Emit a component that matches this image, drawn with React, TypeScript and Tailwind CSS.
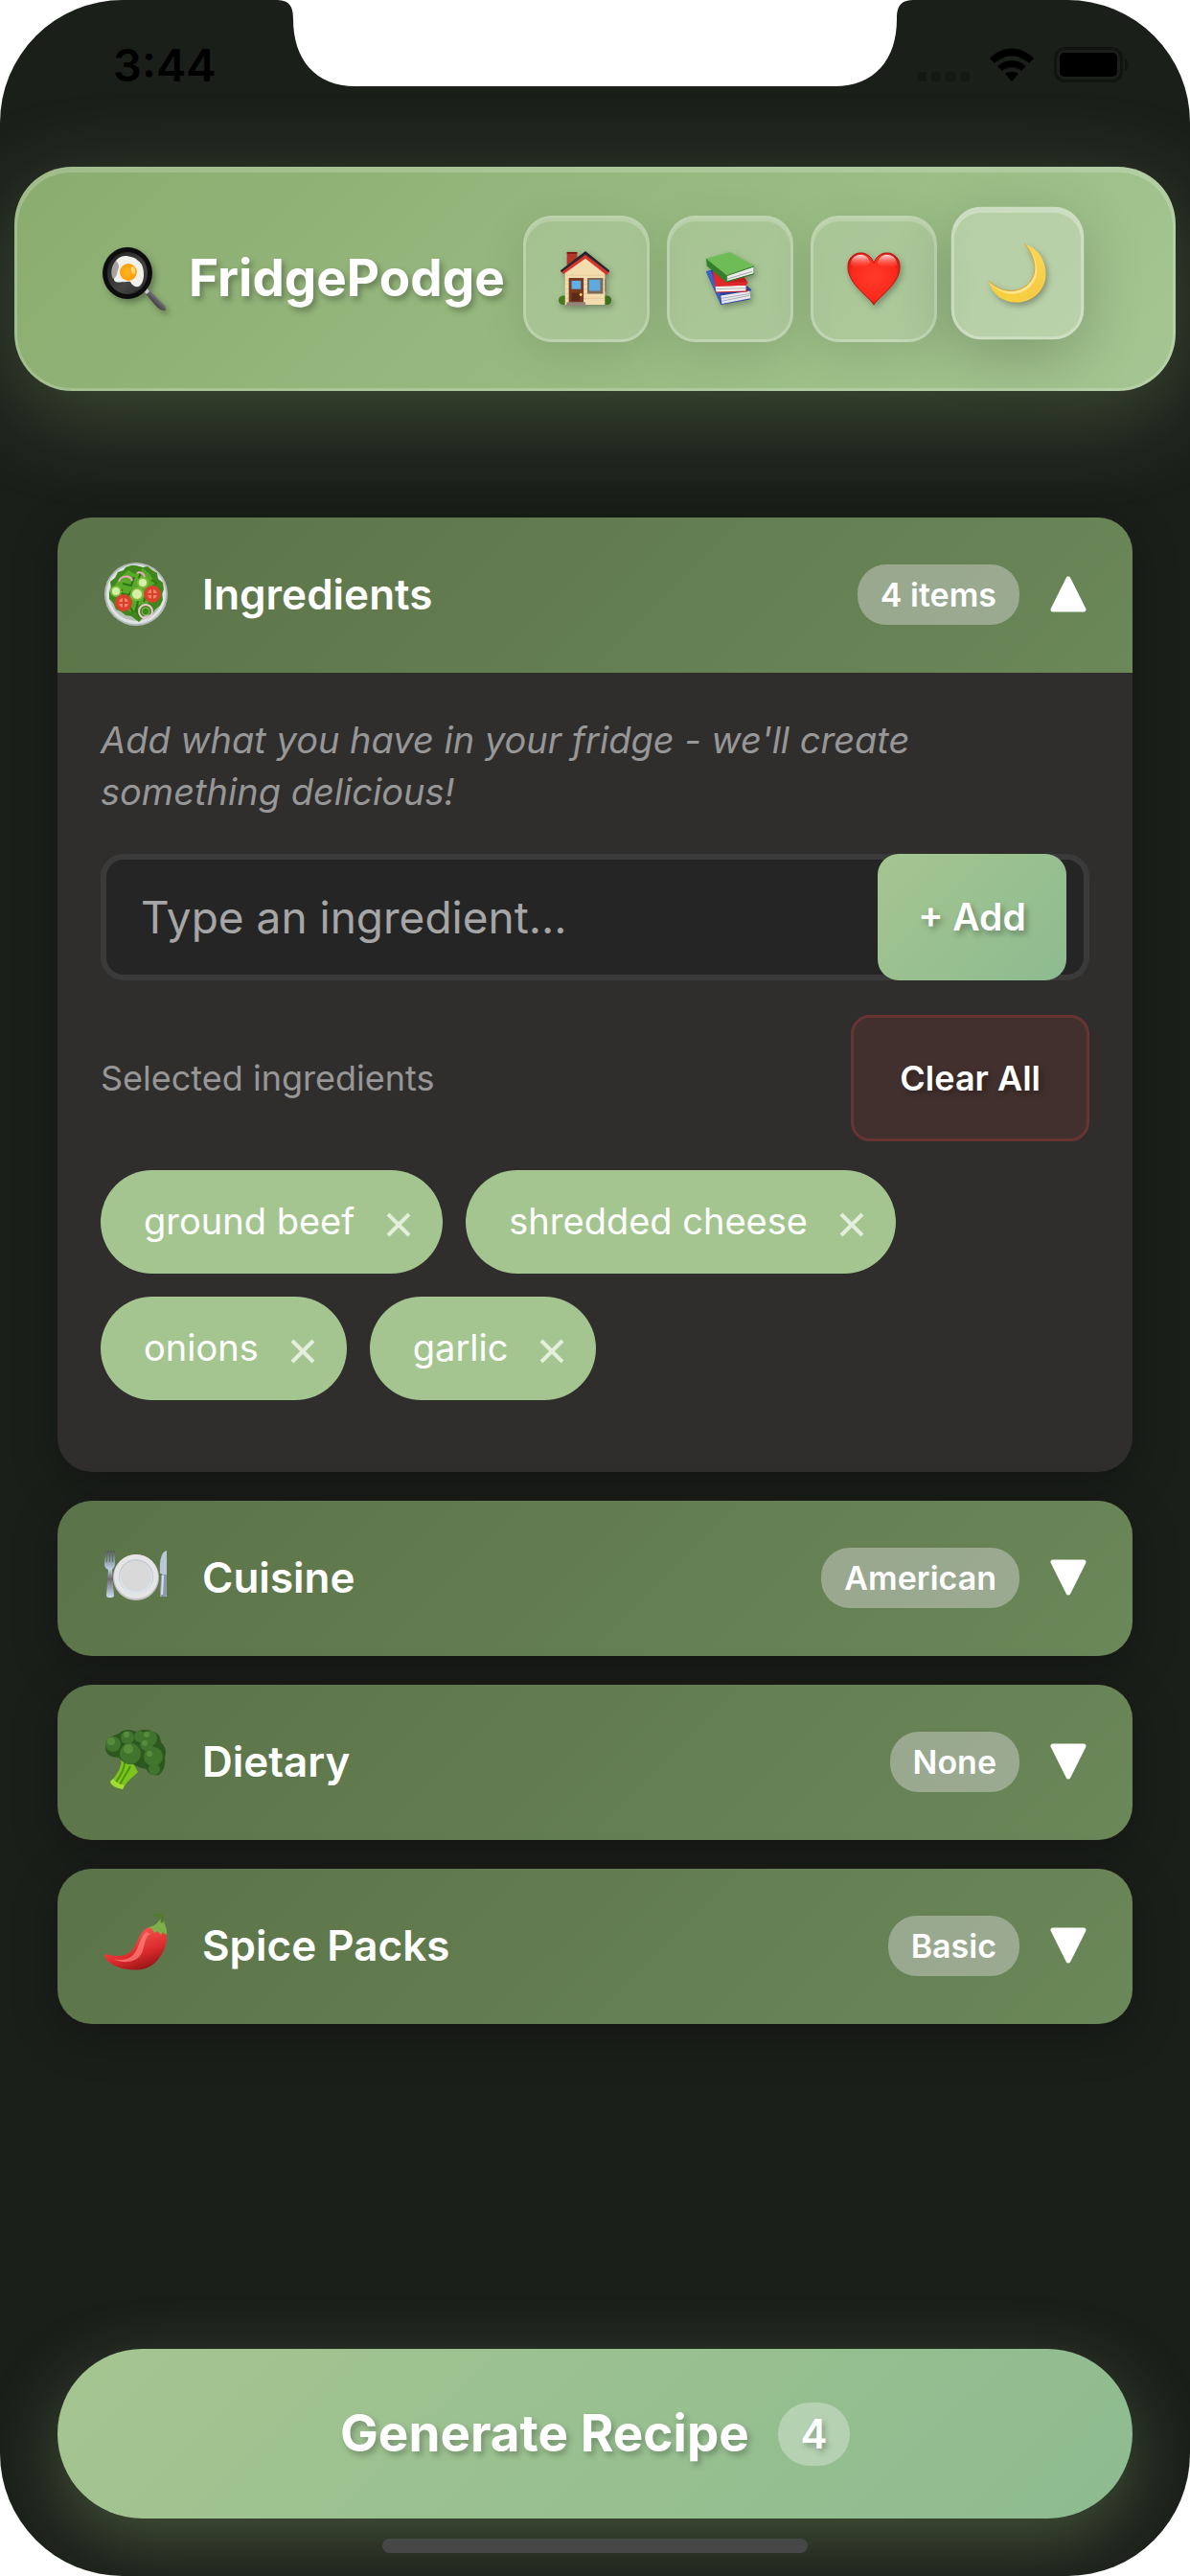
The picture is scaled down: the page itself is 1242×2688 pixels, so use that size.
import React, { useState } from 'react';

const PanIcon = ({ className }: { className?: string }) => (
  <svg viewBox="0 0 66 66" className={className} aria-hidden="true">
    <defs>
      <radialGradient id="panYolk" cx="45%" cy="50%" r="60%">
        <stop offset="0" stopColor="#ffb21f" />
        <stop offset="0.8" stopColor="#f9a010" />
        <stop offset="1" stopColor="#ffc94a" />
      </radialGradient>
      <linearGradient id="panBody" x1="0" y1="0" x2="1" y2="1">
        <stop offset="0" stopColor="#1b1b1b" />
        <stop offset="0.6" stopColor="#454545" />
        <stop offset="1" stopColor="#2a2a2a" />
      </linearGradient>
      <linearGradient id="panHandle" x1="0" y1="1" x2="1" y2="0">
        <stop offset="0.3" stopColor="#2b292d" />
        <stop offset="0.6" stopColor="#77747a" />
      </linearGradient>
    </defs>
    <path d="M43 46l5-3 4 5 13 13c2 3 2 5 0 5-3 1-8-3-12-8z" fill="url(#panHandle)" />
    <path d="M42 45l4-3 3 4-3 3z" fill="#c9c9c9" />
    <ellipse cx="26" cy="27" rx="26" ry="27" fill="#0d0d0d" />
    <ellipse cx="26" cy="27" rx="21" ry="22" fill="url(#panBody)" />
    <path
      d="M14 14c3-4 7-5 11-5 4 1 9 1 12 5 5 3 6 9 6 15 0 5-2 10-5 12-4 1-7-1-9-5-3-1-5 1-8 0-4 1-8 1-9-2 0-4 1-5 0-9 0-4 1-8 2-11z"
      fill="#f0f1ea"
    />
    <path d="M14 14c3 3 4 6 2 10-1 4-1 7-5 9-3-5-2-14 3-19z" fill="#a8a2a0" />
    <circle cx="27" cy="26" r="9" fill="url(#panYolk)" />
    <ellipse cx="32" cy="24" rx="2" ry="4" fill="#ffd873" transform="rotate(-15 32 24)" />
  </svg>
);

const HouseIcon = ({ className }: { className?: string }) => (
  <svg viewBox="0 0 60 60" className={className} aria-hidden="true">
    <circle cx="5" cy="53" r="5" fill="#477a21" />
    <circle cx="52" cy="53" r="5" fill="#3c6f1b" />
    <path d="M48 30h3v14h-3z" fill="#6d5a49" />
    <path d="M9 1h11v16H9z" fill="#b5352a" />
    <path d="M9 1h11v2H9z" fill="#7c1d15" />
    <path d="M7 22 29 6l21 16v36H7z" fill="#f3dcae" />
    <path d="M8 26h41M8 31h41M8 36h41M8 41h41M8 46h41M8 51h41" stroke="#e2c893" strokeWidth="1" />
    <path d="M2 21 29 2l26 20-3 4L29 8 5 25z" fill="#d8352c" />
    <path d="M2 21 29 0l26 21-1 2L29 4 3 23z" fill="#26282d" />
    <path d="M11 29h16v28H11z" fill="#793a22" />
    <path d="M14 32h10v9H14z" fill="#5fb0e8" />
    <path d="M14 45h9v9h-9z" fill="#5e2a18" />
    <circle cx="24" cy="47" r="1.5" fill="#f4d35e" />
    <path d="M31 29h17v17H31z" fill="#7b6a58" />
    <path d="M33 31h12v12H33z" fill="#5fa9df" />
    <path d="M9 55h20v4H8z" fill="#94857a" />
  </svg>
);

const BooksIcon = ({ className }: { className?: string }) => (
  <svg viewBox="0 0 60 60" className={className} aria-hidden="true">
    <path d="M4 22l8-2 8 20 29-2 4 4-3 3 2 7-32 6z" fill="#2846a5" />
    <path d="M4 22l16 35-1-14L9 21z" fill="#3f5fc4" />
    <path d="M20 48l31-5 1 8-31 6z" fill="#e9e9ee" />
    <path d="M21 51l30-5M21 54l30-6" stroke="#a9abb8" strokeWidth="1" />
    <path d="M11 20l33 6 5 8-2 3 2 7-34 1z" fill="#c41b1f" />
    <path d="M14 38l33-1v6l-32 1z" fill="#f0f0f0" />
    <path d="M15 41l32-1" stroke="#b3b3b3" strokeWidth="1" />
    <path d="M11 20l3 18 33-1 2-4-22 1z" fill="#e0282a" />
    <path d="M4 8 30 1l26 15-30 10z" fill="#6dbc55" />
    <path d="M4 8l22 18v8L5 16z" fill="#2f7f2b" />
    <path d="M26 26l29-9v7l-29 9z" fill="#ececec" />
    <path d="M27 30l27-8" stroke="#a6a6a6" strokeWidth="1" />
    <path d="M26 26l30-10v1L27 27v5l29-8v1l-30 9z" fill="#2f7f2b" />
  </svg>
);

const HeartIcon = ({ className }: { className?: string }) => (
  <svg viewBox="0 0 60 60" className={className} aria-hidden="true">
    <defs>
      <radialGradient id="heartFill" cx="50%" cy="45%" r="60%">
        <stop offset="0" stopColor="#ff3b28" />
        <stop offset="0.7" stopColor="#fb2a1c" />
        <stop offset="1" stopColor="#c9140c" />
      </radialGradient>
      <linearGradient id="heartShine" x1="0" y1="0" x2="0" y2="1">
        <stop offset="0" stopColor="#ffffff" stopOpacity="0.85" />
        <stop offset="1" stopColor="#ff5a4a" stopOpacity="0" />
      </linearGradient>
    </defs>
    <path
      d="M30 58C26 50 2 36 2 17 2 8 8 2 16 2c7 0 12 5 14 11C32 7 37 2 44 2c8 0 14 6 14 15 0 19-24 33-28 41z"
      fill="url(#heartFill)"
      stroke="#b5120c"
      strokeWidth="1"
    />
    <path d="M5 15c0-7 5-11 11-11 5 0 9 4 10 9-5 6-17 7-21 2z" fill="url(#heartShine)" />
    <path d="M34 13c1-5 5-9 10-9 6 0 11 4 11 11-4 5-16 4-21-2z" fill="url(#heartShine)" />
  </svg>
);

const MoonIcon = ({ className }: { className?: string }) => (
  <svg viewBox="0 0 64 64" className={className} aria-hidden="true">
    <defs>
      <linearGradient id="moonFill" x1="0.3" y1="1" x2="0.8" y2="0.2">
        <stop offset="0" stopColor="#f8d13e" />
        <stop offset="0.5" stopColor="#f7cb45" />
        <stop offset="1" stopColor="#f8d452" />
      </linearGradient>
    </defs>
    <path
      d="M40 1C54 6 62 18 62 33 62 50 48 63 31 63 16 63 5 54 1 40 11 50 25 54 37 48 53 40 55 20 40 1z"
      fill="url(#moonFill)"
    />
    <path
      d="M40 1C56 18 58 41 39 51 26 58 11 53 1 40 11 50 25 54 37 48 53 40 55 20 40 1z"
      fill="#fbe58a"
    />
    <path d="M40 1C55 20 53 40 37 48 25 54 11 50 1 40" stroke="#dba032" strokeWidth="1" fill="none" />
  </svg>
);

const SaladIcon = ({ className }: { className?: string }) => (
  <svg viewBox="0 0 66 66" className={className} aria-hidden="true">
    <circle cx="33" cy="33" r="33" fill="#b3bcbb" />
    <circle cx="33" cy="33" r="31" fill="#dfe3e4" />
    <circle cx="33" cy="33" r="28" fill="#b5c1b8" />
    <path
      d="M22 5l6-2 5 0 7 2 5-1 5 4 5 3 1 6 5 4 1 7-2 5 1 6-3 6-5 4-3 5-8 1-3 4-3 3-8-6-6-1-5-4-5-2-3-7-4-4 0-7 2-5-1-6 5-4 3-6 6-2z"
      fill="#41861d"
    />
    <path
      d="M17 15l8-7 7 4 8-6 7 6 6 9-6 5 4 8-6 9-9 1-7 8-8-4 2-8-10-2 3-9-5-6z"
      fill="#5aa82a"
    />
    <path
      d="M19 22l9 2 3-9M38 8l-2 9 6 6M17 32l8 2 5-6 8 1M35 40l-2 9 4 8M44 32l-3 9M12 27l7 2M26 45l4 7M49 18l6 4"
      stroke="#2f7415"
      strokeWidth="2"
      fill="none"
    />
    <path d="M15 20c2-7 12-7 14-1M34 11c3-2 7 0 8 4" stroke="#e7a9bd" strokeWidth="2" fill="none" />
    <g stroke="#7fbb3d" strokeWidth="2" fill="#d6efa6">
      <circle cx="12" cy="30" r="5" />
      <circle cx="34" cy="33" r="6" />
      <circle cx="40" cy="21" r="5" />
    </g>
    <circle cx="20" cy="42" r="9" fill="#d8422c" />
    <circle cx="20" cy="42" r="5" fill="#f08368" />
    <path d="M20 35v14M13 42h14" stroke="#d8422c" strokeWidth="2" />
    <circle cx="50" cy="33" r="9" fill="#d8422c" />
    <circle cx="50" cy="33" r="5" fill="#f08368" />
    <path d="M50 26v14M43 33h14" stroke="#d8422c" strokeWidth="2" />
    <circle cx="43" cy="51" r="7" fill="none" stroke="#efc4d2" strokeWidth="2" />
    <circle cx="43" cy="51" r="4" fill="none" stroke="#86be52" strokeWidth="1" />
  </svg>
);

const PlateIcon = ({ className }: { className?: string }) => (
  <svg viewBox="0 0 66 66" className={className} aria-hidden="true">
    <defs>
      <linearGradient id="forkFill" x1="0" y1="0" x2="0" y2="1">
        <stop offset="0" stopColor="#55565a" />
        <stop offset="0.4" stopColor="#bdd0e8" />
        <stop offset="0.6" stopColor="#6c6a70" />
        <stop offset="1" stopColor="#cfe0f5" />
      </linearGradient>
    </defs>
    <path
      d="M1 5h1v12h1V5h2v12h1V5h2v12h1V5h2v14c0 3-2 4-3 6l2 27c0 3-8 3-8 0l2-27C1 23 0 22 0 19z"
      fill="url(#forkFill)"
    />
    <path d="M65 5c-5 1-8 9-7 24h2l-2 24h7z" fill="#b9c7d6" />
    <path d="M59 30h6v21c0 3-7 3-7 0z" fill="#8e9aa8" />
    <path d="M60 31h2l-1 20h-2z" fill="#d5e2f2" />
    <circle cx="33" cy="33" r="24" fill="#c4c4c6" />
    <circle cx="33" cy="32" r="23" fill="#e5e5e6" />
    <circle cx="33" cy="32" r="18" fill="#c9ccd1" />
    <circle cx="33" cy="33" r="17" fill="#dce6f2" />
    <circle cx="33" cy="32" r="16" fill="#d9d9da" />
  </svg>
);

const BroccoliIcon = ({ className }: { className?: string }) => (
  <svg viewBox="0 0 66 66" className={className} aria-hidden="true">
    <path d="M17 31c2 6-3 15-11 24 2 4 6 6 13 7 4-8 10-12 16-18L27 30z" fill="#7cc51c" />
    <path d="M21 34c0 9-6 16-10 22M27 38c-3 7-8 12-11 20" stroke="#4c9411" strokeWidth="2" fill="none" />
    <path d="M6 54c2 4 6 6 13 8l2-4c-5-1-9-3-12-7z" fill="#a4dd35" />
    <path
      d="M15 4c4-5 12-5 18-2 7-3 13-3 17 0 7 1 8 6 9 11 5 4 6 11 4 16 1 8-1 14-6 18-8 1-12-2-13-6-7-1-10-3-14-5-7 1-12-3-15-7-8 0-13-3-14-9 0-9 6-14 14-16z"
      fill="#2c571f"
    />
    <g fill="#41752e">
      <circle cx="9" cy="15" r="8" />
      <circle cx="24" cy="8" r="7" />
      <circle cx="37" cy="7" r="6" />
      <circle cx="47" cy="9" r="8" />
      <circle cx="44" cy="15" r="7" />
      <circle cx="27" cy="25" r="11" />
      <circle cx="51" cy="28" r="10" />
      <circle cx="52" cy="41" r="6" />
    </g>
    <g fill="#568c3c">
      <circle cx="7" cy="12" r="4" />
      <circle cx="23" cy="5" r="3" />
      <circle cx="44" cy="5" r="3" />
      <circle cx="25" cy="20" r="5" />
      <circle cx="47" cy="25" r="3" />
      <circle cx="42" cy="14" r="3" />
    </g>
  </svg>
);

const ChiliIcon = ({ className }: { className?: string }) => (
  <svg viewBox="0 0 66 66" className={className} aria-hidden="true">
    <defs>
      <linearGradient id="chiliFill" x1="0.3" y1="0.2" x2="0.7" y2="1">
        <stop offset="0" stopColor="#f4544f" />
        <stop offset="0.55" stopColor="#dc2a2b" />
        <stop offset="1" stopColor="#8f1215" />
      </linearGradient>
    </defs>
    <path
      d="M2 42c10 3 20 3 26-3 7-8 8-20 16-24 9-4 20 0 21 9 0 14-10 29-22 33C28 61 8 57 1 46c-2-2-1-4 1-4z"
      fill="url(#chiliFill)"
    />
    <path d="M44 19c-7 4-7 17-15 25-5 4-13 5-20 3 10 5 22 4 28-3 6-8 4-20 11-23z" fill="#ff8480" opacity="0.7" />
    <path d="M46 14c6-1 9-4 12-8h4c0 6 4 8 3 16-2-1-3-2-4-3l-2 3-4-4-3 2-2-4z" fill="#7fae4c" />
    <path d="M60 8c2-5-2-8-7-7" stroke="#527d27" strokeWidth="3" strokeLinecap="round" fill="none" />
  </svg>
);

const WifiIcon = () => (
  <svg viewBox="0 0 48 36" className="h-9 w-12" aria-hidden="true">
    <path d="M1 11c13-14 33-14 46 0l-5 5C31 6 17 6 6 16z" />
    <path d="M9 19c9-8 21-8 30 0l-5 5c-6-5-14-5-20 0z" />
    <path d="M17 27c4-3 10-3 14 0l-7 8z" />
  </svg>
);

const BatteryIcon = () => (
  <svg viewBox="0 0 80 38" className="h-[38px] w-20" aria-hidden="true">
    <rect x="1.5" y="1.5" width="69" height="34" rx="10" fill="none" stroke="#121412" strokeWidth="3" />
    <rect x="6" y="6" width="60" height="25" rx="5" fill="#000000" />
    <path d="M74 12c5 2 5 11 0 13z" fill="#121412" />
  </svg>
);

const Triangle = ({ up }: { up?: boolean }) => (
  <svg viewBox="0 0 38 38" className={`h-[38px] w-[38px] ${up ? '' : 'rotate-180'}`} aria-hidden="true">
    <path d="M19 3 35 35H3z" fill="white" stroke="white" strokeWidth="5" strokeLinejoin="round" />
  </svg>
);

interface SectionProps {
  icon: React.ReactNode;
  title: string;
  badge: string;
  open?: boolean;
  onToggle?: () => void;
  children?: React.ReactNode;
}

const Section: React.FC<SectionProps> = ({ icon, title, badge, open, onToggle, children }) => (
  <section className="overflow-hidden rounded-[36px] bg-[#2f2e2d] shadow-[0_12px_48px_rgba(0,0,0,0.3)]">
    <button
      type="button"
      onClick={onToggle}
      aria-expanded={!!open}
      className="flex h-[162px] w-full items-center bg-linear-135 from-[#5b7348] to-[#6b8859] pr-12 pb-[2px] pl-[49px] text-white"
    >
      {icon}
      <span className="ml-9 flex-1 text-left text-[44px] font-semibold">{title}</span>
      <span className="mr-8 flex h-[63px] items-center rounded-[30px] bg-[#d7d7d7]/45 px-6 text-[34px] font-semibold">
        {badge}
      </span>
      <Triangle up={open} />
    </button>
    {open && children}
  </section>
);

const navItems = [
  { label: 'Home', icon: HouseIcon },
  { label: 'Recipes', icon: BooksIcon },
  { label: 'Favorites', icon: HeartIcon },
];

const App: React.FC = () => {
  const [ingredients, setIngredients] = useState(['ground beef', 'shredded cheese', 'onions', 'garlic']);
  const [value, setValue] = useState('');
  const [open, setOpen] = useState(true);

  const addIngredient = () => {
    const next = value.trim();
    if (next && !ingredients.includes(next)) {
      setIngredients([...ingredients, next]);
    }
    setValue('');
  };

  return (
    <div className="bg-white font-['Inter','Liberation_Sans',sans-serif]">
      <div className="relative flex min-h-screen flex-col overflow-hidden rounded-[128px] bg-[#1b1f1a]">
        {/* Status bar */}
        <div className="flex h-[174px] items-start justify-between pt-[38px] pr-[62px] pl-[118px]">
          <span className="text-[47px] leading-[60px] font-semibold text-black">3:44</span>
          <div className="flex h-[60px] items-center gap-5">
            <div className="flex h-[38px] items-end gap-[5px] pb-[2px]">
              <span className="h-[10px] w-[10px] rounded-[3px] bg-[#151915]" />
              <span className="h-[10px] w-[10px] rounded-[3px] bg-[#151915]" />
              <span className="h-[10px] w-[10px] rounded-[3px] bg-[#151915]" />
              <span className="h-[10px] w-[10px] rounded-[3px] bg-[#151915]" />
            </div>
            <WifiIcon />
            <BatteryIcon />
          </div>
        </div>
        <svg
          viewBox="0 0 668 90"
          className="absolute top-0 left-1/2 h-[90px] w-[668px] -translate-x-1/2"
          aria-hidden="true"
        >
          <path
            d="M0 0C14 0 19 5 19 20C19 62 42 90 84 90H584C626 90 649 62 649 20C649 5 654 0 668 0Z"
            fill="white"
          />
        </svg>

        {/* Header */}
        <header className="mx-[15px] flex h-[234px] items-center justify-between rounded-[60px] border-[3px] border-white/20 bg-linear-135 from-[#8aac6e] to-[#a5c692] bg-origin-border pr-24 pl-[89px] shadow-[0_24px_96px_rgba(138,172,110,0.33),inset_0_3px_0_rgba(255,255,255,0.2)]">
          <div className="flex items-center gap-6 text-white">
            <PanIcon className="h-[66px] w-[66px] drop-shadow-[3px_4px_3px_rgba(0,0,0,0.3)]" />
            <h1 className="text-[53px] font-bold text-shadow-[3px_4px_6px_rgba(0,0,0,0.3)]">FridgePodge</h1>
          </div>
          <nav className="flex gap-[18px]">
            {navItems.map(({ label, icon: Icon }) => (
              <button
                key={label}
                type="button"
                aria-label={label}
                className="flex h-[132px] w-[132px] items-center justify-center rounded-[30px] border-[3px] border-white/25 bg-white/15 shadow-[0_12px_48px_rgba(0,0,0,0.1),inset_0_3px_0_rgba(255,255,255,0.2)]"
              >
                <Icon className="h-[58px] w-[58px] drop-shadow-[2px_3px_3px_rgba(0,0,0,0.3)]" />
              </button>
            ))}
            <button
              type="button"
              aria-label="Toggle dark mode"
              className="flex h-[132px] w-[132px] -translate-y-[6px] scale-105 items-center justify-center rounded-[30px] border-[3px] border-white/30 bg-white/25 shadow-[0_16px_60px_rgba(0,0,0,0.2),inset_0_3px_0_rgba(255,255,255,0.3)]"
            >
              <MoonIcon className="h-[60px] w-[60px] drop-shadow-[2px_3px_3px_rgba(0,0,0,0.3)]" />
            </button>
          </nav>
        </header>

        {/* Sections */}
        <main className="flex flex-1 flex-col gap-[30px] px-[60px] pt-[132px]">
          <Section
            icon={<SaladIcon className="h-[66px] w-[66px]" />}
            title="Ingredients"
            badge={`${ingredients.length} items`}
            open={open}
            onToggle={() => setOpen(!open)}
          >
            <div className="px-[45px] pt-[43px] pb-[75px]">
              <p className="text-[38px] leading-[54px] text-[#979797] italic">
                Add what you have in your fridge - we'll create something delicious!
              </p>
              <div className="relative mt-[38px]">
                <input
                  type="text"
                  aria-label="Ingredient"
                  value={value}
                  onChange={(e) => setValue(e.target.value)}
                  placeholder="Type an ingredient..."
                  className="h-[132px] w-full rounded-3xl border-[6px] border-[#3a3a3a] bg-[#252525] pr-60 pl-9 text-[46px] text-white placeholder:text-[#a6a6a6]"
                />
                <button
                  type="button"
                  onClick={addIngredient}
                  className="absolute top-0 right-6 h-[132px] w-[197px] rounded-[22px] bg-linear-135 from-[#a5c590] to-[#8dbb90] text-[39px] font-semibold text-white text-shadow-[3px_4px_6px_rgba(0,0,0,0.3)]"
                >
                  + Add
                </button>
              </div>
              <div className="mt-9 flex items-center justify-between">
                <span className="text-[36px] text-[#979797]">Selected ingredients</span>
                <button
                  type="button"
                  onClick={() => setIngredients([])}
                  className="h-[132px] rounded-[20px] border-[3px] border-[#683433] bg-[#41302e] px-12 text-[36px] font-semibold text-white text-shadow-[3px_3px_6px_rgba(0,0,0,0.3)]"
                >
                  Clear All
                </button>
              </div>
              <div className="mt-[30px] flex flex-wrap gap-6">
                {ingredients.map((item) => (
                  <span
                    key={item}
                    className="flex h-[108px] items-center rounded-full bg-[#a4c590] pr-6 pb-[2px] pl-[45px] text-[38px] text-white"
                  >
                    {item}
                    <button
                      type="button"
                      aria-label={`Remove ${item}`}
                      onClick={() => setIngredients(ingredients.filter((i) => i !== item))}
                      className="ml-6 flex h-11 w-11 items-center justify-center pt-2"
                    >
                      <svg viewBox="0 0 26 28" className="h-7 w-[26px]" aria-hidden="true">
                        <path d="M2 3l22 22M24 3L2 25" stroke="#e4eedd" strokeWidth="4" />
                      </svg>
                    </button>
                  </span>
                ))}
              </div>
            </div>
          </Section>
          <Section icon={<PlateIcon className="h-[66px] w-[66px]" />} title="Cuisine" badge="American" />
          <Section icon={<BroccoliIcon className="h-[66px] w-[66px]" />} title="Dietary" badge="None" />
          <Section icon={<ChiliIcon className="h-[66px] w-[66px]" />} title="Spice Packs" badge="Basic" />
        </main>

        {/* Generate button */}
        <footer className="px-[60px] pt-16 pb-6">
          <button
            type="button"
            className="flex h-[177px] w-full items-center justify-center gap-[30px] rounded-full bg-linear-135 from-[#a5c590] to-[#8dbb90] text-[53px] font-bold text-white shadow-[0_24px_72px_rgba(138,172,110,0.36)] text-shadow-[3px_4px_6px_rgba(0,0,0,0.25)]"
          >
            Generate Recipe
            <span className="flex h-[66px] w-[75px] items-center justify-center rounded-[33px] bg-white/30 text-[42px] font-semibold">
              {ingredients.length}
            </span>
          </button>
          <div className="relative mx-auto mt-[21px] h-[15px] w-[444px] rounded-full bg-[#474747]" />
        </footer>
      </div>
    </div>
  );
};

export default App;
